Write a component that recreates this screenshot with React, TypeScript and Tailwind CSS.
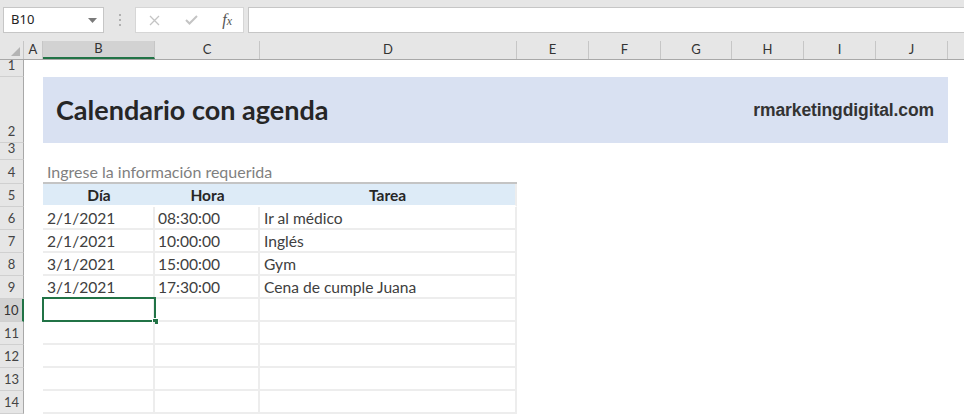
import React from "react";

const COLS = ["A", "B", "C", "D", "E", "F", "G", "H", "I", "J"];
const W = [
  "w-[19px]",
  "w-[112px]",
  "w-[105px]",
  "w-[257px]",
  "w-[72px]",
  "w-[72px]",
  "w-[71px]",
  "w-[72px]",
  "w-[72px]",
  "w-[72px]",
];

const cal = { fontFamily: "Lato, 'Open Sans', sans-serif" };

const data = [
  ["2/1/2021", "08:30:00", "Ir al médico"],
  ["2/1/2021", "10:00:00", "Inglés"],
  ["3/1/2021", "15:00:00", "Gym"],
  ["3/1/2021", "17:30:00", "Cena de cumple Juana"],
  ["", "", ""],
  ["", "", ""],
  ["", "", ""],
  ["", "", ""],
  ["", "", ""],
];

function RowHead({ n, h, active }: { n: number; h: string; active?: boolean }) {
  return (
    <div
      className={`${h} w-[24px] shrink-0 flex items-end justify-center pb-[2px] text-[13px] leading-[17px] border-b border-[#d0d0d0] ${
        active
          ? "bg-[#d2d2d2] text-[#333] border-r-2 border-r-[#217346]"
          : "bg-[#e6e6e6] text-[#444] border-r border-r-[#a8a8a8]"
      }`}
      style={cal}
    >
      {n}
    </div>
  );
}

export default function App() {
  return (
    <div className="w-[964px] h-[415px] overflow-hidden bg-white relative" style={cal}>
      {/* Toolbar */}
      <div className="h-[41px] bg-[#e6e6e6] flex items-start pt-[7px] pl-[3px]">
        <div
          className="w-[101px] h-[26px] bg-white border border-[#c6c6c6] flex items-center justify-between pl-[7px] pr-[6px]"
          style={{ fontFamily: "'Noto Sans', sans-serif" }}
        >
          <span className="text-[13px] text-[#222]">B10</span>
          <svg width="9" height="5" viewBox="0 0 9 5">
            <path d="M0 0 L9 0 L4.5 5 Z" fill="#7a7a7a" />
          </svg>
        </div>
        <div className="w-[31px] h-[26px] flex flex-col items-center justify-center gap-[3px]">
          <div className="w-[2px] h-[2px] bg-[#b0b0b0]" />
          <div className="w-[2px] h-[2px] bg-[#b0b0b0]" />
          <div className="w-[2px] h-[2px] bg-[#b0b0b0]" />
        </div>
        <div className="w-[109px] h-[26px] bg-white border border-[#d6d6d6] flex items-center">
          <div className="w-[36px] flex justify-center pl-[2px]">
            <svg width="11" height="11" viewBox="0 0 11 11">
              <path d="M1 1 L10 10 M10 1 L1 10" stroke="#c4c4c4" strokeWidth="1.3" />
            </svg>
          </div>
          <div className="w-[36px] flex justify-center pl-[4px]">
            <svg width="13" height="10" viewBox="0 0 13 10">
              <path d="M1 5 L4.5 8.5 L12 1" stroke="#c4c4c4" strokeWidth="2" fill="none" />
            </svg>
          </div>
          <div
            className="w-[36px] flex justify-center pl-[4px] text-[16px] italic text-[#555] leading-none"
            style={{ fontFamily: "'Liberation Serif', serif" }}
          >
            <span>
              f<span className="text-[12px]">x</span>
            </span>
          </div>
        </div>
        <div className="ml-[4px] flex-1 h-[26px] bg-white border border-[#c6c6c6] border-r-0" />
      </div>

      {/* Column headers */}
      <div className="h-[19px] flex bg-[#e6e6e6] border-b border-[#a8a8a8] text-[13px] text-[#333]">
        <div className="w-[24px] shrink-0 relative border-r border-[#c6c6c6]">
          <svg className="absolute right-[3px] bottom-[3px]" width="9" height="9" viewBox="0 0 9 9">
            <path d="M9 0 L9 9 L0 9 Z" fill="#b4b4b4" />
          </svg>
        </div>
        {COLS.map((c, i) => (
          <div
            key={c}
            className={`${W[i]} shrink-0 flex items-center justify-center border-r border-[#c6c6c6] ${
              c === "B" ? "bg-[#d2d2d2] border-b-2 border-b-[#217346]" : ""
            }`}
          >
            {c}
          </div>
        ))}
        <div className="flex-1" />
      </div>

      {/* Row 1 */}
      <div className="flex h-[17px]">
        <RowHead n={1} h="h-[17px]" />
      </div>

      {/* Row 2 banner */}
      <div className="flex h-[66px]">
        <RowHead n={2} h="h-[66px]" />
        <div className="w-[19px] shrink-0" />
        <div className="w-[905px] shrink-0 bg-[#d9e1f2] flex items-center justify-between pl-[13px] pr-[14px]">
          <span className="text-[27px] font-bold text-[#262626] leading-none pb-[1px]">
            Calendario con agenda
          </span>
          <span
            className="text-[17.5px] font-bold text-[#333] tracking-[-0.1px]"
            style={{ fontFamily: "'Liberation Sans', Arial, sans-serif" }}
          >
            rmarketingdigital.com
          </span>
        </div>
      </div>

      {/* Row 3 */}
      <div className="flex h-[17px]">
        <RowHead n={3} h="h-[17px]" />
      </div>

      {/* Row 4 */}
      <div className="flex h-[24px]">
        <RowHead n={4} h="h-[24px]" />
        <div className="w-[19px] shrink-0" />
        <div className="flex items-end pl-[4px] text-[16px] text-[#7f7f7f] leading-[20px] border-b-2 border-[#c4c4c4] w-[474px]">
          Ingrese la información requerida
        </div>
      </div>

      {/* Row 5 header */}
      <div className="flex h-[23px]">
        <RowHead n={5} h="h-[23px]" />
        <div className="w-[19px] shrink-0" />
        <div className="w-[474px] flex bg-[#ddebf7] border-r-2 border-[#ededed] border-b-2 border-b-white text-[15.5px] font-bold text-[#262626] leading-[20px]">
          <div className="w-[112px] flex items-end justify-center">Día</div>
          <div className="w-[105px] flex items-end justify-center">Hora</div>
          <div className="flex-1 flex items-end justify-center">Tarea</div>
        </div>
      </div>

      {data.map((r, i) => {
        const n = i + 6;
        return (
          <div key={n} className="flex h-[23px]">
            <RowHead n={n} h="h-[23px]" active={n === 10} />
            <div className="w-[19px] shrink-0" />
            <div className="relative w-[474px] flex text-[15.6px] text-[#404040] leading-[20px]">
              <div className="w-[112px] flex items-end pl-[4px] border-r-2 border-b-2 border-[#ededed]">
                {r[0]}
              </div>
              <div className="w-[105px] flex items-end pl-[3px] border-r-2 border-b-2 border-[#ededed]">
                {r[1]}
              </div>
              <div className="flex-1 flex items-end pl-[4px] border-r-2 border-b-2 border-[#ededed]">
                {r[2]}
              </div>
              {n === 10 && (
                <div className="absolute left-[-1px] top-[-2px] w-[114px] h-[25px] border-2 border-[#217346]">
                  <div className="absolute right-[-5px] bottom-[-5px] w-[7px] h-[7px] bg-[#217346] border border-white" />
                </div>
              )}
            </div>
          </div>
        );
      })}
    </div>
  );
}
